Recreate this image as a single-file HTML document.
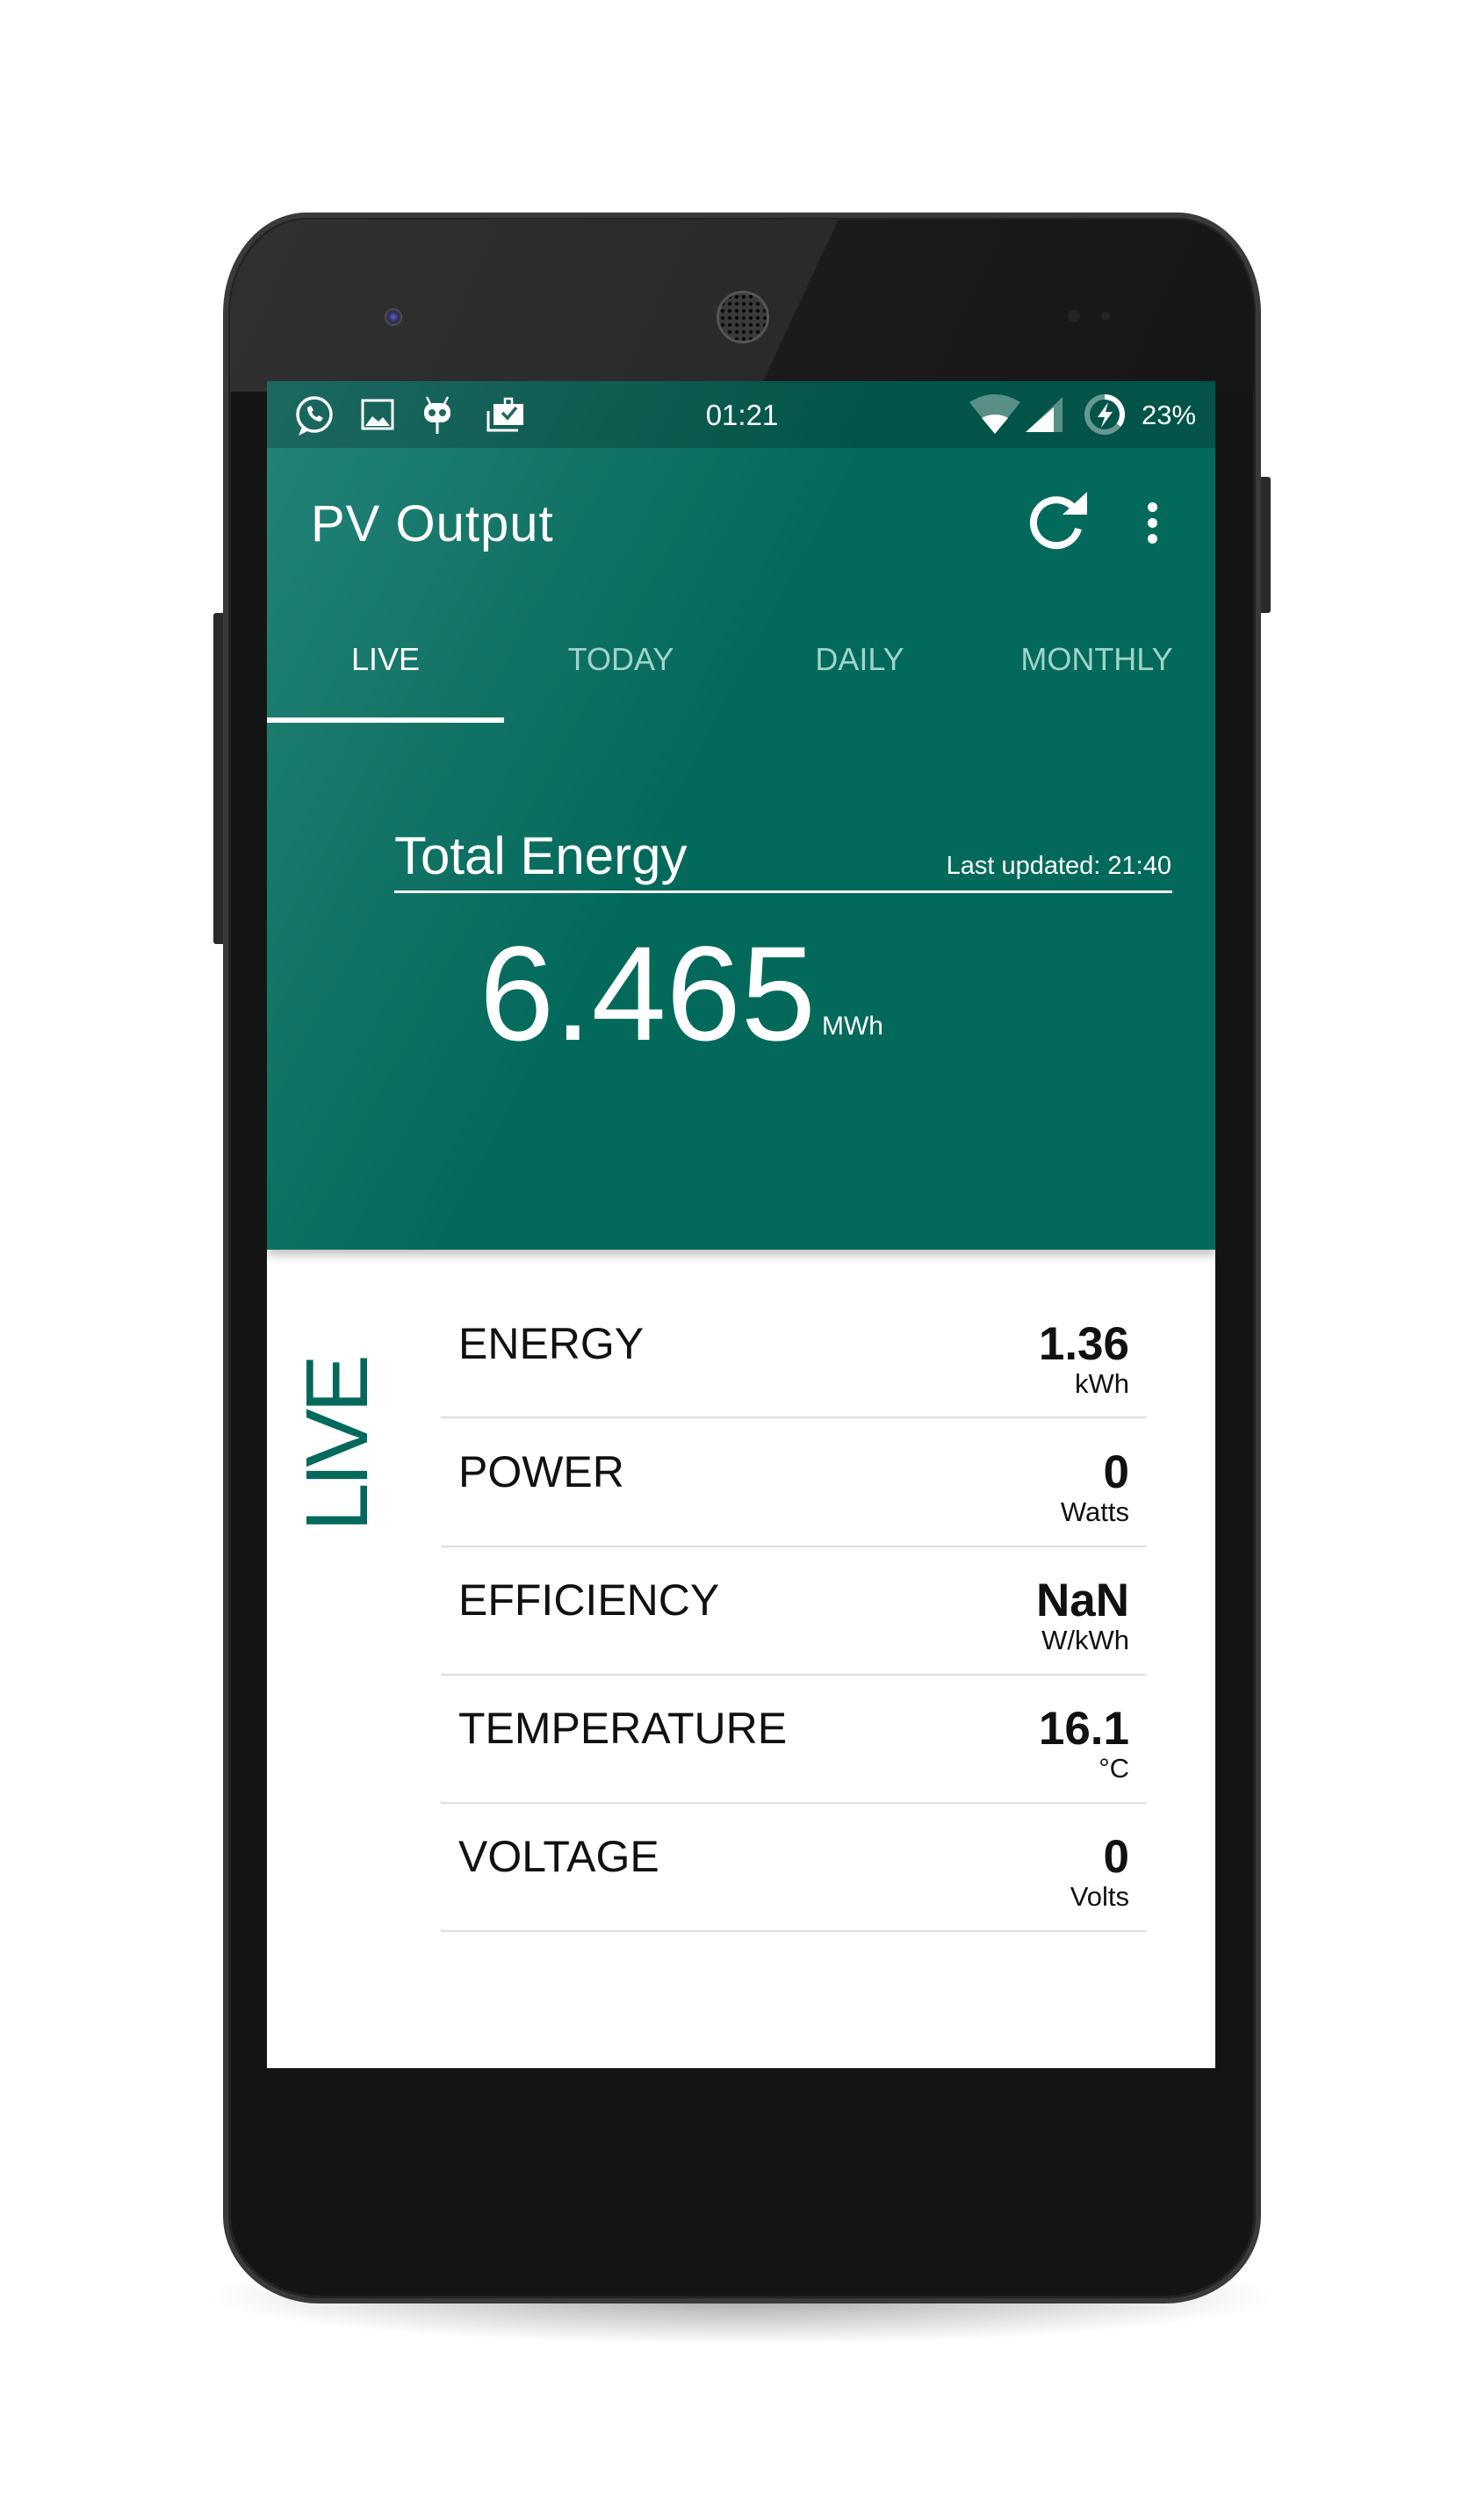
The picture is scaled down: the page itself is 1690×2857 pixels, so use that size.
<!DOCTYPE html>
<html><head><meta charset="utf-8"><style>
*{margin:0;padding:0;box-sizing:border-box}
body{width:1690px;height:2857px;background:#fff;position:relative;overflow:hidden;font-family:"Liberation Sans",sans-serif}
.abs{position:absolute}
.shadow{left:230px;top:2560px;width:1230px;height:110px;border-radius:50%;background:radial-gradient(ellipse at center,rgba(0,0,0,.35),rgba(0,0,0,0) 70%)}
.phone{left:254px;top:242px;width:1182px;height:2381px;border-radius:95px 95px 110px 110px/115px 115px 100px 100px;background:#141414;border:6px solid #3a3a3a;box-shadow:inset 0 0 0 3px #222}
.bezel{left:262px;top:250px;width:1166px;height:196px;border-radius:88px 88px 0 0/108px 108px 0 0;background:linear-gradient(115deg,#303030 0%,#2a2a2a 55%,#1b1b1b 55.2%,#161616 100%)}
.btn{background:#2a2a2a;border-radius:3px}
.screen{left:304px;top:434px;width:1080px;height:1921px;background:#fff;overflow:hidden}
.green{left:0;top:0;width:1080px;height:989px;background:linear-gradient(118deg,#23837a 0%,#137466 25%,#036a5b 45%,#036a5b 100%);box-shadow:0 6px 10px rgba(0,0,0,.25)}
.status{left:0;top:0;width:1080px;height:76px;background:rgba(0,0,0,.2)}
.w{color:#fff}
.tab{top:296px;font-size:36px;width:270px;text-align:center;color:#9fd3c9}
.row{left:198px;width:804px;height:146px;border-bottom:2px solid #dedede}
.lab{left:20px;top:0;font-size:50px;color:#111;line-height:1}
.val{right:20px;font-size:53px;font-weight:bold;color:#111;line-height:1;text-align:right}
.unit{right:20px;font-size:31px;color:#111;line-height:1;text-align:right}
</style></head><body>
<div class="abs shadow"></div>
<div class="abs btn" style="left:1430px;top:543px;width:17px;height:155px"></div>
<div class="abs btn" style="left:243px;top:698px;width:17px;height:377px"></div>
<div class="abs phone"></div>
<div class="abs bezel"></div>
<div class="abs" style="left:438px;top:351px;width:20px;height:20px;border-radius:50%;background:radial-gradient(circle,#5a5fc0 0,#2a2a50 45%,#555 70%,#333 100%)"></div>
<div class="abs" style="left:816px;top:331px;width:60px;height:60px;border-radius:50%;background:radial-gradient(circle,#000 1.5px,transparent 2.5px) 0 0/8px 8px,#3a3a3a;border:3px solid #555"></div>
<div class="abs" style="left:1216px;top:353px;width:14px;height:14px;border-radius:50%;background:#242424"></div>
<div class="abs" style="left:1254px;top:355px;width:10px;height:10px;border-radius:50%;background:#242424"></div>

<div class="abs screen">
 <div class="abs green">
  <div class="abs status"></div>
  <svg class="abs" style="left:28px;top:14px" width="300" height="50" viewBox="0 0 300 50" fill="none" stroke="#fff" stroke-width="3.5">
   <circle cx="26" cy="24" r="19"/><path d="M12 38 L8 48 L20 42" fill="#fff" stroke="none"/>
   <path d="M18 16c0 8 6 15 15 16l3-4-5-3-2 2c-3-1-5-3-6-6l2-2-3-5z" fill="#fff" stroke="none"/>
   <rect x="81" y="8" width="34" height="32" stroke-width="3"/><path d="M84 37 L92 26 L99 32 L104 27 L112 37z" fill="#fff" stroke="none"/>
   <path d="M158 12 L154 4 M174 12 L178 4" stroke-width="2.5"/><rect x="151" y="11" width="30" height="22" rx="10" fill="#fff" stroke="none"/><circle cx="160" cy="22" r="4" fill="#1e6a5d" stroke="none"/><circle cx="172" cy="22" r="4" fill="#1e6a5d" stroke="none"/><path d="M166 33 V46" stroke-width="3"/>
   <rect x="230" y="12" width="34" height="24" fill="#fff" stroke="none"/><path d="M224 20 V42 H258" stroke-width="3"/><path d="M240 22 L246 28 L256 16" stroke="#1e6a5d" stroke-width="3.5"/><rect x="243" y="6" width="8" height="8" stroke-width="2.5"/>
  </svg>
  <div class="abs w" style="left:0;width:1080px;top:20px;text-align:center;font-size:33px;padding-left:2px;">01:21</div>
  <svg class="abs" style="left:798px;top:12px" width="280" height="52" viewBox="0 0 280 52">
   <path d="M2 12 Q31 -6 60 12 L31 48z" fill="#fff" fill-opacity=".35"/><path d="M16 30 Q31 22 46 30 L31 48z" fill="#fff"/>
   <path d="M108 6 V46 H66z" fill="#fff" fill-opacity=".35"/><path d="M98 18 V46 H66z" fill="#fff"/>
   <circle cx="156" cy="26" r="20" fill="none" stroke="#fff" stroke-opacity=".4" stroke-width="6"/><path d="M156 6 A20 20 0 0 1 172 38" fill="none" stroke="#fff" stroke-width="6"/><path d="M160 12 L148 29 H156 L152 41 L165 23 H157z" fill="#fff"/>
  </svg>
  <div class="abs w" style="left:996px;top:21px;font-size:31px">23%</div>
  <div class="abs w" style="left:50px;top:128px;font-size:58px;line-height:1.2;letter-spacing:1px">PV Output</div>
  <svg class="abs" style="left:862px;top:124px" width="80" height="70" viewBox="0 0 80 70"><path d="M58 22 A26 26 0 1 0 62 44" fill="none" stroke="#fff" stroke-width="8"/><path d="M44 28 L72 28 L72 2z" fill="#fff"/></svg>
  <div class="abs" style="left:1003px;top:138px;width:11px;height:11px;border-radius:50%;background:#fff;box-shadow:0 18px 0 #fff,0 36px 0 #fff"></div>
  <div class="abs tab" style="left:0;color:#fff">LIVE</div>
  <div class="abs tab" style="left:268px">TODAY</div>
  <div class="abs tab" style="left:540px">DAILY</div>
  <div class="abs tab" style="left:810px">MONTHLY</div>
  <div class="abs" style="left:0;top:383px;width:270px;height:6px;background:#fff"></div>
  <div class="abs w" style="left:145px;top:505px;font-size:60px;line-height:1.2">Total Energy</div>
  <div class="abs w" style="right:50px;top:536px;font-size:29px">Last updated: 21:40</div>
  <div class="abs" style="left:145px;top:580px;width:886px;height:3px;background:#fff"></div>
  <div class="abs w" style="left:242px;top:606px;font-size:153px;line-height:1.2">6.465</div>
  <div class="abs w" style="left:632px;top:718px;font-size:30px">MWh</div>
 </div>
 <div class="abs" style="left:30px;top:1310px;width:300px;text-align:left;font-size:100px;color:#036a5b;transform:rotate(-90deg);transform-origin:0 0;line-height:1;letter-spacing:-5px">LIVE</div>
 <div class="abs row" style="top:1035px"><div class="abs lab" style="top:36px">ENERGY</div><div class="abs val" style="top:35px">1.36</div><div class="abs unit" style="top:91px">kWh</div></div>
 <div class="abs row" style="top:1182px"><div class="abs lab" style="top:35px">POWER</div><div class="abs val" style="top:34px">0</div><div class="abs unit" style="top:90px">Watts</div></div>
 <div class="abs row" style="top:1328px"><div class="abs lab" style="top:35px">EFFICIENCY</div><div class="abs val" style="top:34px">NaN</div><div class="abs unit" style="top:90px">W/kWh</div></div>
 <div class="abs row" style="top:1474px"><div class="abs lab" style="top:35px">TEMPERATURE</div><div class="abs val" style="top:34px">16.1</div><div class="abs unit" style="top:90px">°C</div></div>
 <div class="abs row" style="top:1620px"><div class="abs lab" style="top:35px">VOLTAGE</div><div class="abs val" style="top:34px">0</div><div class="abs unit" style="top:90px">Volts</div></div>
</div>
</body></html>
